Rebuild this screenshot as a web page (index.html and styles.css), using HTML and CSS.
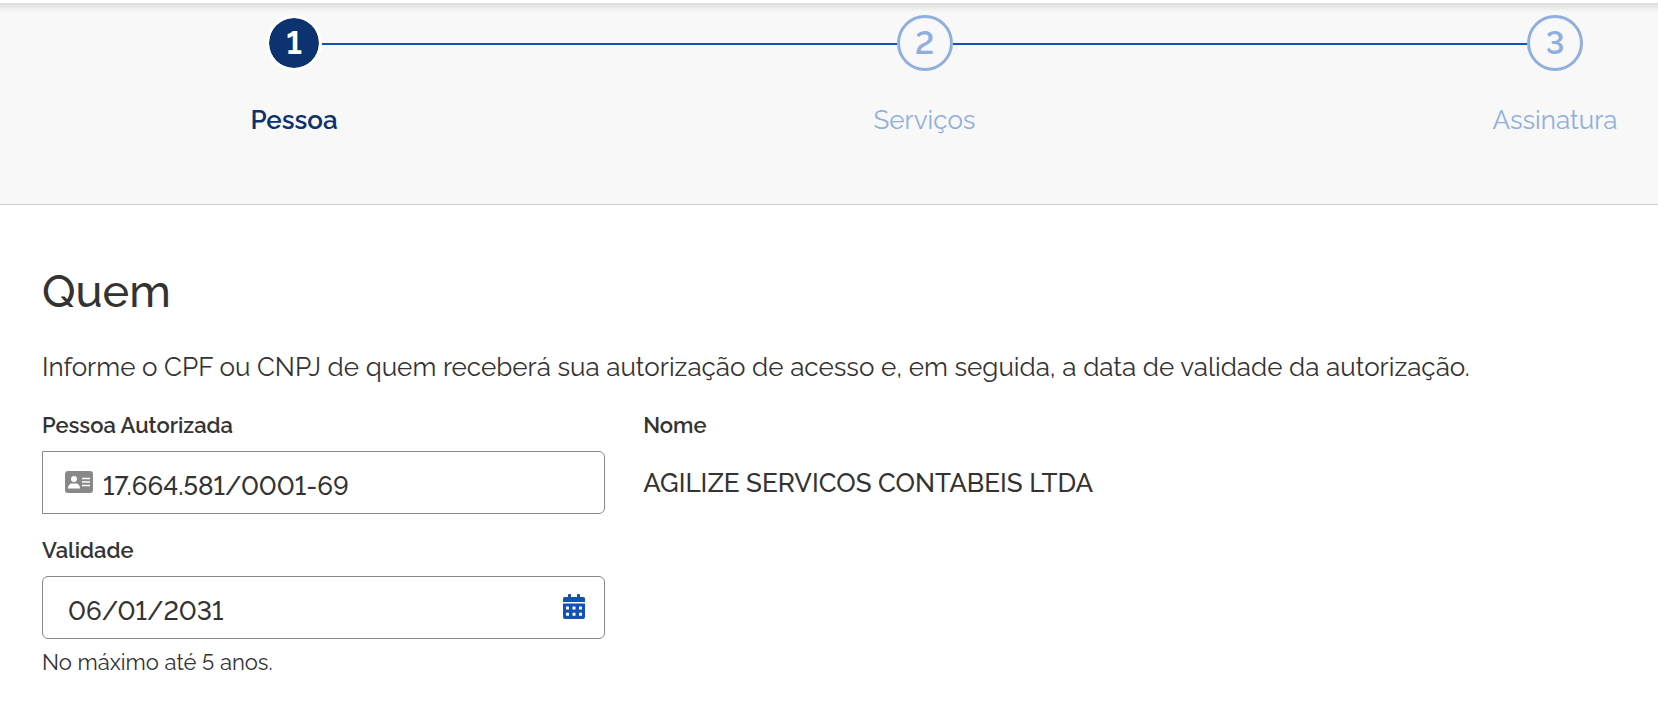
FILE: index.html
```html
<!DOCTYPE html>
<html lang="pt-BR">
<head>
  <meta charset="UTF-8">
  <meta name="viewport" content="width=device-width, initial-scale=1.0">
  <title>Nova Autorização</title>
  <link rel="stylesheet" href="styles.css">
</head>
<body>
  <nav class="wizard" aria-label="Etapas">
    <ol class="steps">
      <li class="step active">
        <button type="button" aria-current="step"><span class="circle">1</span><span class="step-name">Pessoa</span></button>
      </li>
      <li class="line" aria-hidden="true"></li>
      <li class="step">
        <button type="button"><span class="circle">2</span><span class="step-name">Serviços</span></button>
      </li>
      <li class="line" aria-hidden="true"></li>
      <li class="step">
        <button type="button"><span class="circle">3</span><span class="step-name">Assinatura</span></button>
      </li>
    </ol>
  </nav>

  <main class="content">
    <h1>Quem</h1>
    <p class="intro">Informe o CPF ou CNPJ de quem receberá sua autorização de acesso e, em seguida, a data de validade da autorização.</p>

    <form class="form">
      <div class="field">
        <label for="pessoa">Pessoa Autorizada</label>
        <div class="box box-doc">
          <svg class="icon-card" viewBox="0 0 28 22" aria-hidden="true">
            <rect width="28" height="22" rx="3" fill="#888"/>
            <circle cx="9" cy="8" r="3" fill="#fff"/>
            <path d="M3 17.500c0-3 1.500-5 4-5h4c2.500 0 4 2 4 5z" fill="#fff"/>
            <path d="M17 7.500h8M17 11h8M17 14.500h8" stroke="#fff" stroke-width="1.500"/>
          </svg>
          <input type="text" id="pessoa" value="17.664.581/0001-69">
        </div>
      </div>

      <div class="field">
        <label for="nome">Nome</label>
        <output id="nome">AGILIZE SERVICOS CONTABEIS LTDA</output>
      </div>

      <div class="field">
        <label for="validade">Validade</label>
        <div class="box">
          <input type="text" id="validade" value="06/01/2031" aria-describedby="dica">
          <button type="button" class="calendar" aria-label="Abrir calendário">
            <svg viewBox="0 0 22 25" aria-hidden="true">
              <path fill="#1351b4" fill-rule="evenodd" d="M5 1.200a1 1 0 0 1 3 0V3h6V1.200a1 1 0 0 1 3 0V3H20A2 2 0 0 1 22 5.200V8H0V5.200A2 2 0 0 1 2 3H5zM0 9.500h22V23a2 2 0 0 1-2 2H2a2 2 0 0 1-2-2zM3 12.500v3h3v-3zm6.500 0v3h3v-3zm6.500 0v3h3v-3zM3 18.800v3h3v-3zm6.500 0v3h3v-3zm6.500 0v3h3v-3z"/>
            </svg>
          </button>
        </div>
        <small id="dica">No máximo até 5 anos.</small>
      </div>
    </form>
  </main>
</body>
</html>
```

FILE: styles.css
```css
* {
  box-sizing: border-box;
}
body {
  margin: 0;
  background: #fff;
  color: #333;
  font-family: Raleway, Lato, sans-serif;
  font-size: 26px;
  font-variant-numeric: lining-nums;
  line-height: 32px;
}
button,
input {
  font: inherit;
  font-variant-numeric: inherit;
  color: inherit;
  background: none;
  border: 0;
  padding: 0;
}

/* steps */
.wizard {
  margin-top: 3px;
  padding: 12px 38px 68px 229px;
  background: linear-gradient(#ddd, #f8f8f8 9px);
  border-bottom: 1px solid #ccc;
}
.steps {
  display: flex;
  margin: 0;
  padding: 0;
  list-style: none;
}
.step {
  width: 130px;
}
.step button {
  display: flex;
  flex-direction: column;
  align-items: center;
  gap: 33px;
  width: 100%;
  color: #91afdd;
  cursor: pointer;
}
.circle {
  width: 56px;
  height: 56px;
  border: 3px solid #91afdd;
  border-radius: 50%;
  font-size: 32px;
  font-weight: 600;
  line-height: 50px;
}
.step.active button {
  color: #0c326f;
}
.active .circle {
  background: #0c326f;
  background-clip: padding-box;
  border-color: #fff;
  color: #fff;
  font-weight: 700;
}
.active .step-name {
  font-weight: 600;
}
.line {
  flex: 1;
  height: 2px;
  margin: 28px -37px 0;
  background: #1351b4;
}

/* form */
.content {
  padding: 60px 42px;
}
h1 {
  margin: 0 0 32px;
  font-size: 45px;
  font-weight: 500;
  line-height: 54px;
}
.intro {
  margin: 0 0 28px;
}
.form {
  display: grid;
  grid-template-columns: 11fr 19fr;
  gap: 21px 38px;
}
.field {
  display: flex;
  flex-direction: column;
}
label {
  margin-bottom: 12px;
  font-size: 22px;
  font-weight: 600;
  line-height: 28px;
}
.box {
  display: flex;
  align-items: center;
  height: 63px;
  padding: 0 19px 2px 25px;
  border: 1px solid #888;
  border-radius: 6px;
}
.box-doc {
  gap: 10px;
  padding-left: 22px;
  border-radius: 0 6px 6px 0;
}
.box input {
  flex: 1;
  min-width: 0;
  height: 100%;
  padding-top: 8px;
  font-weight: 500;
  outline: 0;
}
.icon-card {
  width: 28px;
  height: 22px;
}
.calendar {
  display: flex;
  cursor: pointer;
}
.calendar svg {
  width: 22px;
  height: 25px;
}
output {
  padding-top: 1px;
  font-weight: 500;
  line-height: 63px;
}
small {
  margin-top: 8px;
  font-size: 22px;
  line-height: 30px;
}
```
